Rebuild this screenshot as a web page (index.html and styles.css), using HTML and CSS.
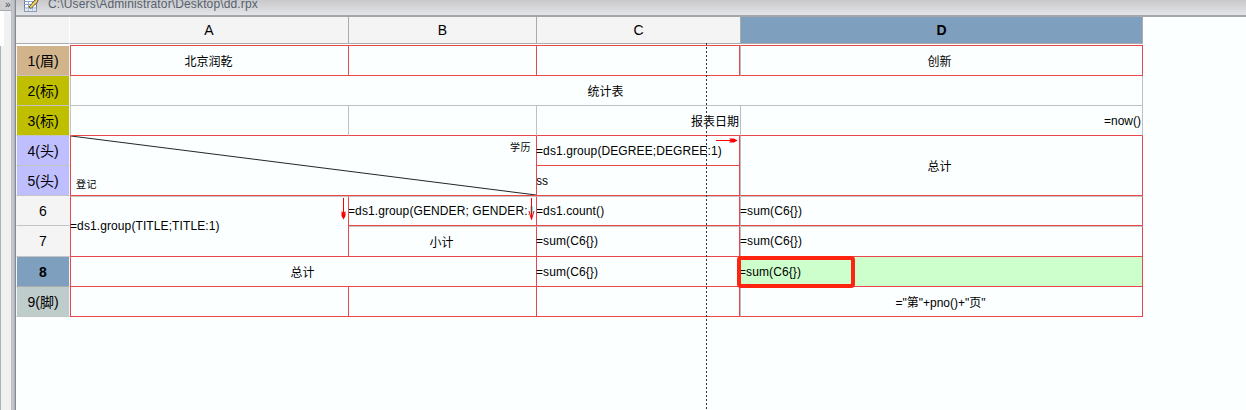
FILE: index.html
```html
<!DOCTYPE html>
<html lang="zh">
<head>
<meta charset="utf-8">
<title>dd.rpx</title>
<link rel="stylesheet" href="styles.css">
</head>
<body>
<div class="app">
  <aside class="rail">
    <div class="rail-top"><span class="rail-arrows">»</span></div>
    <div class="rail-box"></div>
  </aside>
  <main class="main">
    <header class="topbar">
      <svg class="doc-icon" width="16" height="12" viewBox="0 0 16 12">
        <path d="M1.5 -2.5H13.5V11.5H1.5Z" fill="#fff" stroke="#6f7f96"/>
        <path d="M1.5 1.5H13.5M1.5 4.5H13.5M1.5 8H13.5M5.5 1.5V11.5M9.5 1.5V11.5" stroke="#8ea6c8" fill="none"/>
        <path d="M1.5 8.5H13.5V11.5H1.5Z" fill="#c9d8ee" opacity=".6"/>
        <path d="M6 7L12 0L15 -1L14.5 2L8 8.5Z" fill="#f3cf55" stroke="#3a3a3a" stroke-width=".8"/>
      </svg>
      <span class="path">C:\Users\Administrator\Desktop\dd.rpx</span>
    </header>
    <section class="sheet">
      <div class="grid">
        <div class="corner"></div>
        <div class="colhead">A</div>
        <div class="colhead">B</div>
        <div class="colhead colhead-c">C</div>
        <div class="colhead colhead-d">D</div>

        <div class="rowhead rowhead-first tan">1(眉)</div>
        <div class="cell top left center">北京润乾</div>
        <div class="cell top"></div>
        <div class="cell top"></div>
        <div class="cell top dcell center nudge">创新</div>

        <div class="rowhead olive">2(标)</div>
        <div class="cell span4 gleft gbottom gright center">统计表</div>

        <div class="rowhead olive">3(标)</div>
        <div class="cell gleft gright"></div>
        <div class="cell gright"></div>
        <div class="cell noright end">报表日期</div>
        <div class="cell dcell gright end">=now()</div>

        <div class="rowhead lilac">4(头)</div>
        <div class="cell span2x2 left diagonal">
          <svg class="diag-line" viewBox="0 0 466 60" preserveAspectRatio="none"><line x1="0" y1="0" x2="466" y2="60"/></svg>
          <span class="diag-top">学历</span>
          <span class="diag-bottom">登记</span>
        </div>
        <div class="cell formula arrow-host">=ds1.group(DEGREE;DEGREE:1)
          <svg class="arrow arrow-right" width="22" height="7" viewBox="0 0 22 7"><path d="M0 3.5H21" stroke="#f00"/><path d="M13 1.5H18L21.5 3.5L18 5.5H13L15 3.5Z" fill="#f00"/></svg>
        </div>
        <div class="cell rows2 dcell center nudge">总计</div>

        <div class="rowhead lilac">5(头)</div>
        <div class="cell formula">ss</div>

        <div class="rowhead plain">6</div>
        <div class="cell formula rows2 left gtop arrow-host">=ds1.group(TITLE;TITLE:1)
          <svg class="arrow arrow-down" width="7" height="22" viewBox="0 0 7 22"><path d="M3.5 0V21" stroke="#f00"/><path d="M1.5 13V18L3.5 21.5L5.5 18V13L3.5 15Z" fill="#f00"/></svg>
        </div>
        <div class="cell formula gtop arrow-host"><span class="clip">=ds1.group(GENDER; GENDER:1)</span>
          <svg class="arrow arrow-down" width="7" height="22" viewBox="0 0 7 22"><path d="M2 8L5 8L5 17L3.5 19L2 17Z" fill="#7fe8ee"/><path d="M3.5 0V21" stroke="#f00"/><path d="M1 13L3.5 21.5L6 13" fill="none" stroke="#f00"/></svg>
        </div>
        <div class="cell formula gtop">=ds1.count()</div>
        <div class="cell formula gtop dcell">=sum(C6{})</div>

        <div class="rowhead plain">7</div>
        <div class="cell gtop center">小计</div>
        <div class="cell formula gtop">=sum(C6{})</div>
        <div class="cell formula gtop dcell">=sum(C6{})</div>

        <div class="rowhead active">8</div>
        <div class="cell span2 left center">总计</div>
        <div class="cell formula">=sum(C6{})</div>
        <div class="cell formula selected">=sum(C6{})<div class="selection"></div></div>

        <div class="rowhead slate">9(脚)</div>
        <div class="cell left"></div>
        <div class="cell"></div>
        <div class="cell"></div>
        <div class="cell dcell center">="第"+pno()+"页"</div>
      </div>
      <div class="split-line"></div>
    </section>
  </main>
</div>
</body>
</html>
```

FILE: styles.css
```css
* { box-sizing: border-box; }
html, body { margin: 0; height: 410px; overflow: hidden; }
body {
  font-family: "Liberation Sans", "Noto Sans CJK SC", sans-serif;
  font-size: 12px;
  color: #000;
  background: #fbffff;
}
.app { display: flex; height: 410px; }

/* left rail */
.rail {
  width: 16px;
  flex: none;
  display: flex;
  flex-direction: column;
  background: linear-gradient(to right, #aab2ba 0, #aab2ba 1px, #f1f1f1 1px, #f1f1f1 11px, #b9bcc0 11px, #c8cace 13px, #a9adb2 15px, #858a90 15px);
}
.rail-top {
  height: 11px;
  width: 11px;
  background: #cfcfd1;
  border-bottom: 1px solid #a8acb2;
  position: relative;
}
.rail-arrows {
  position: absolute;
  left: 5px;
  top: -1px;
  font-size: 10px;
  line-height: 12px;
  color: #444;
}
.rail-box {
  width: 4px;
  height: 35px;
  background: #fff;
  border-bottom: 1px solid #fff;
}

.main { flex: 1; min-width: 0; display: flex; flex-direction: column; }

/* top bar */
.topbar {
  height: 17px;
  flex: none;
  display: flex;
  align-items: flex-start;
  background: linear-gradient(to bottom, #c9c9cb, #e4e5e9);
  border-bottom: 2px solid #a3a7ac;
  padding-left: 7px;
  overflow: hidden;
}
.doc-icon { flex: none; margin-right: 9px; }
.path {
  font-size: 12px;
  line-height: 12px;
  letter-spacing: .14px;
  margin-top: -2px;
  color: #56616e;
  white-space: nowrap;
}

/* sheet */
.sheet { flex: 1; position: relative; background: #fbffff; }
.grid {
  display: grid;
  grid-template-columns: 54px 279px 188px 203px 403px;
  grid-template-rows: 28px 31px 30px 30px 30px 30px 30px 31px 30px 30px;
  width: 1127px;
}

/* column heads */
.corner, .colhead {
  height: 27px;
  background: #f4f4f4;
  border-bottom: 1px solid #ababab;
}
.corner { border-right: 1px solid #fff; }
.colhead {
  display: flex;
  align-items: center;
  justify-content: center;
  font-size: 14px;
  border-right: 1px solid #ababab;
}
.colhead-c { border-right: 0; }
.colhead-d {
  background: #7f9fbf;
  font-weight: 700;
  border-left: 1px solid #ababab;
  border-right: 1px solid #ababab;
}

/* row heads */
.rowhead {
  display: flex;
  align-items: center;
  justify-content: center;
  font-size: 14px;
  border-left: 1px solid #f4f4f4;
  border-bottom: 1px solid #c4c4c4;
  border-right: 1px solid #f4f4f4;
}
.rowhead-first { margin-top: 1px; }
.tan { background: #d2b48c; padding-bottom: 1px; }
.olive { background: #bfbf00; padding-bottom: 1px; }
.lilac { background: #bfbfff; padding-bottom: 1px; }
.plain { background: #f4f4f4; }
.active { background: #7f9fbf; font-weight: 700; border-bottom-color: #ababab; }
.slate { background: #bfcccc; padding-bottom: 1px; }

/* cells */
.cell {
  display: flex;
  align-items: center;
  min-width: 0;
  white-space: nowrap;
  font-size: 12px;
  background: #fbffff;
  border-right: 1px solid #e8484a;
  border-bottom: 1px solid #e8484a;
}
.formula { text-indent: -1px; letter-spacing: .1px; }
.top { border-top: 1px solid #e8484a; }
.left { border-left: 1px solid #e8484a; }
.gtop { border-top: 1px solid #c4c4c4; padding-bottom: 1px; }
.gleft { border-left: 1px solid #c4c4c4; }
.gright { border-right: 1px solid #c0c0c0; }
.gbottom { border-bottom: 1px solid #c0c0c0; }
.noright { border-right: 0; }
.dcell { border-left: 1px solid #bdbdbd; }
.center { justify-content: center; padding-right: 2px; }
.end { justify-content: flex-end; padding-right: 1px; }
.nudge { padding-right: 4px; }
.span2 { grid-column: span 2; }
.span4 { grid-column: span 4; }
.rows2 { grid-row: span 2; }
.span2x2 { grid-column: span 2; grid-row: span 2; }
.clip { overflow: hidden; flex: 1; margin-right: 7px; }

/* diagonal header */
.diagonal {
  position: relative;
  flex-direction: column;
  align-items: stretch;
  justify-content: space-between;
  font-size: 10px;
  letter-spacing: .5px;
  padding: 3px 5px 4px 5px;
}
.diag-line {
  position: absolute;
  left: 0;
  top: 0;
  width: 100%;
  height: 100%;
}
.diag-line line { stroke: #222; stroke-width: 1; }
.diag-top { align-self: flex-end; }
.diag-bottom { align-self: flex-start; }

/* flow arrows */
.arrow-host { position: relative; }
.arrow { position: absolute; }
.arrow-down { right: 1px; top: 1px; }
.arrow-right { right: 1px; top: 1px; }

/* selected cell */
.selected { position: relative; background: #ccffcc; border-right-color: #e8484a; }
.selection {
  position: absolute;
  left: -3px;
  top: -1px;
  width: 118px;
  height: 32px;
  border: 4px solid #ff2412;
  border-radius: 4px;
}

/* vertical split line */
.split-line {
  position: absolute;
  left: 690px;
  top: 26px;
  bottom: 0;
  width: 1px;
  background: repeating-linear-gradient(to bottom, #333 0, #333 2px, transparent 2px, transparent 4px);
}
```
